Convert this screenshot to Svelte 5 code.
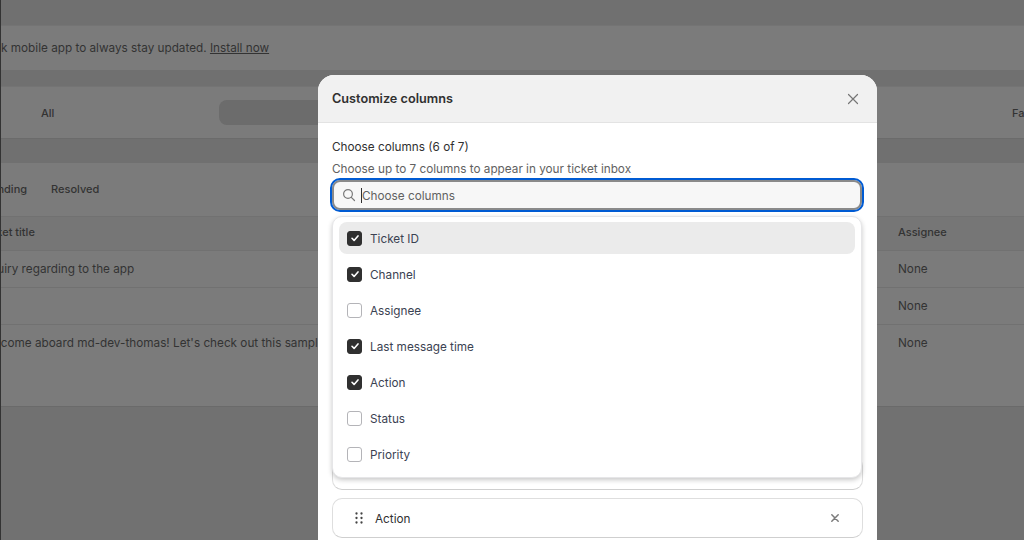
<script lang="ts">
	const options = [
		{ name: 'Ticket ID', checked: true },
		{ name: 'Channel', checked: true },
		{ name: 'Assignee', checked: false },
		{ name: 'Last message time', checked: true },
		{ name: 'Action', checked: true },
		{ name: 'Status', checked: false },
		{ name: 'Priority', checked: false }
	];
</script>

<div class="page">
	<div class="gap top"></div>
	<div class="banner">k mobile app to always stay updated. <span class="link">Install now</span></div>
	<div class="gap mid"></div>
	<div class="tabs-card">
		<span class="tab-all">All</span>
		<span class="tab-pill"></span>
		<span class="tab-fa">Fa</span>
	</div>
	<div class="gap lower"></div>
	<div class="table">
		<div class="filters">
			<span class="pending">Pending</span>
			<span>Resolved</span>
		</div>
		<div class="row head">
			<span class="title">Ticket title</span>
			<span class="assignee">Assignee</span>
		</div>
		<div class="row">
			<span class="title">Inquiry regarding to the app</span>
			<span class="assignee">None</span>
		</div>
		<div class="row">
			<span class="title"></span>
			<span class="assignee">None</span>
		</div>
		<div class="row">
			<span class="title">Welcome aboard md-dev-thomas! Let's check out this sample ticket</span>
			<span class="assignee">None</span>
		</div>
	</div>

	<div class="modal">
		<header class="modal-head">
			<h2>Customize columns</h2>
			<svg class="close" width="14" height="14" viewBox="0 0 14 14" aria-hidden="true">
				<path d="M2.5 2.5l9 9M11.5 2.5l-9 9" stroke="#767676" stroke-width="1.2" stroke-linecap="round" fill="none" />
			</svg>
		</header>
		<div class="modal-body">
			<div class="count">Choose columns (6 of 7)</div>
			<div class="hint">Choose up to 7 columns to appear in your ticket inbox</div>
			<div class="search">
				<svg width="14" height="14" viewBox="0 0 14 14" aria-hidden="true">
					<circle cx="6" cy="6" r="4.4" stroke="#7a7a7a" stroke-width="1.2" fill="none" />
					<path d="M9.3 9.3l3.2 3.2" stroke="#7a7a7a" stroke-width="1.2" stroke-linecap="round" />
				</svg>
				<span class="caret"></span>
				<span class="placeholder">Choose columns</span>
			</div>
			<div class="selected">
				<div class="chip hidden-chip"></div>
				<div class="chip">
					<svg width="8" height="12" viewBox="0 0 8 12" aria-hidden="true">
						{#each [1.5, 6, 10.5] as cy}
							{#each [1.5, 6.5] as cx}
								<circle {cx} {cy} r="1.15" fill="#444" />
							{/each}
						{/each}
					</svg>
					<span class="chip-label">Action</span>
					<svg class="chip-x" width="10" height="10" viewBox="0 0 10 10" aria-hidden="true">
						<path d="M1.8 1.8l6.4 6.4M8.2 1.8l-6.4 6.4" stroke="#7b7b7b" stroke-width="1.5" stroke-linecap="round" />
					</svg>
				</div>
				<div class="chip"></div>
			</div>

			<div class="dropdown">
				{#each options as opt, i}
					<div class="option" class:active={i === 0}>
						<span class="box" class:on={opt.checked}>
							{#if opt.checked}
								<svg width="10" height="10" viewBox="0 0 10 10" aria-hidden="true">
									<path d="M2 5.3l2.1 2.1L8 2.9" stroke="#fff" stroke-width="1.6" fill="none" stroke-linecap="round" stroke-linejoin="round" />
								</svg>
							{/if}
						</span>
						<span class="option-name">{opt.name}</span>
					</div>
				{/each}
			</div>
		</div>
	</div>
</div>

<style>
	:global(body) {
		margin: 0;
		background: #717171;
	}

	.page {
		position: relative;
		width: 1024px;
		height: 540px;
		overflow: hidden;
		background: #717171;
		border-left: 1px solid #333;
		box-sizing: border-box;
		font-family: Inter, 'Liberation Sans', sans-serif;
		font-size: 11.76px;
		color: #333;
	}

	.gap {
		background: #707070;
	}

	.top {
		height: 25px;
	}

	.mid {
		height: 16px;
	}

	.lower {
		height: 24px;
	}

	.banner {
		height: 45px;
		line-height: 45px;
		background: #7b7b7b;
		border-top: 1px solid #747474;
		box-sizing: border-box;
		white-space: nowrap;
	}

	.link {
		text-decoration: underline;
	}

	.tabs-card {
		display: flex;
		align-items: center;
		height: 53px;
		background: #7b7b7b;
		border-top: 1px solid #747474;
		border-bottom: 1px solid #6b6b6b;
		box-sizing: border-box;
		font-weight: 500;
		font-size: 11px;
	}

	.tab-all {
		margin-left: 40px;
	}

	.tab-pill {
		width: 120px;
		height: 25px;
		margin-left: 165px;
		border-radius: 8px;
		background: #6c6c6c;
	}

	.tab-fa {
		margin-left: auto;
		width: 12px;
		overflow: hidden;
	}

	.table {
		background: #7b7b7b;
		height: 244px;
		border-bottom: 1px solid #6a6a6a;
		box-sizing: border-box;
	}

	.filters {
		display: flex;
		align-items: center;
		gap: 24px;
		height: 53px;
		padding-bottom: 2px;
		box-sizing: border-box;
		font-weight: 500;
		font-size: 11px;
	}

	.pending {
		margin-left: -17px;
	}

	.row {
		display: flex;
		align-items: center;
		height: 37px;
		border-top: 1px solid #717171;
		box-sizing: border-box;
		white-space: nowrap;
	}

	.head {
		height: 34px;
		padding-bottom: 3px;
		background: #767676;
		font-size: 11px;
		font-weight: 500;
	}

	.title {
		width: 918px;
		margin-left: -21px;
		flex: none;
		overflow: hidden;
	}

	.modal {
		position: absolute;
		left: 317px;
		top: 75px;
		width: 559px;
		height: 520px;
		background: #fff;
		border-radius: 16px 16px 0 0;
		overflow: hidden;
	}

	.modal-head {
		display: flex;
		align-items: center;
		justify-content: space-between;
		height: 48px;
		padding: 0 17px 0 14px;
		background: #f1f1f1;
		border-bottom: 1px solid #e3e3e3;
		box-sizing: border-box;
	}

	h2 {
		margin: 0;
		font-size: 12.7px;
		font-weight: 600;
		color: #303030;
	}

	.modal-body {
		position: relative;
		padding: 17px 14px 0;
	}

	.count {
		line-height: 15px;
		color: #303030;
	}

	.hint {
		margin-top: 7px;
		line-height: 15px;
		color: #616161;
	}

	.search {
		display: flex;
		align-items: center;
		width: 518px;
		height: 26px;
		margin-top: 3px;
		padding-left: 8px;
		background: #f7f7f7;
		border: 2px solid #8a8a8a;
		border-radius: 8px;
		outline: 2px solid #005bd3;
		color: #616161;
	}

	.caret {
		width: 1px;
		height: 15px;
		margin-left: 5px;
		background: #303030;
	}

	.placeholder {
		padding-top: 2px;
	}

	.selected {
		display: flex;
		flex-direction: column;
		gap: 8px;
		margin-top: 246px;
	}

	.chip {
		display: flex;
		align-items: center;
		flex: none;
		height: 38px;
		padding: 0 22px 0 22px;
		background: #fff;
		border: 1px solid #dedede;
		border-bottom-color: #cfcfcf;
		border-radius: 10px;
	}

	.hidden-chip {
		height: 32px;
	}

	.chip-label {
		margin-left: 12px;
		padding-top: 2px;
		color: #303030;
	}

	.chip-x {
		margin-left: auto;
	}

	.dropdown {
		position: absolute;
		left: 14px;
		top: 93px;
		width: 530px;
		height: 262px;
		padding: 5px 6px;
		background: #fff;
		border: 1px solid #e6e6e8;
		border-radius: 10px;
		box-shadow: 0 2px 5px rgba(0, 0, 0, 0.22);
		box-sizing: border-box;
	}

	.option {
		display: flex;
		align-items: center;
		gap: 8px;
		height: 32px;
		margin-bottom: 4px;
		padding-left: 8px;
		border-radius: 8px;
		color: #3b4252;
	}

	.option-name {
		padding-top: 2px;
	}

	.active {
		background: #ebebeb;
	}

	.box {
		display: flex;
		align-items: center;
		justify-content: center;
		width: 15px;
		height: 15px;
		background: #fff;
		border: 1px solid #b4b4b8;
		border-radius: 3px;
		box-sizing: border-box;
	}

	.on {
		background: #303030;
		border-color: #303030;
	}
</style>
